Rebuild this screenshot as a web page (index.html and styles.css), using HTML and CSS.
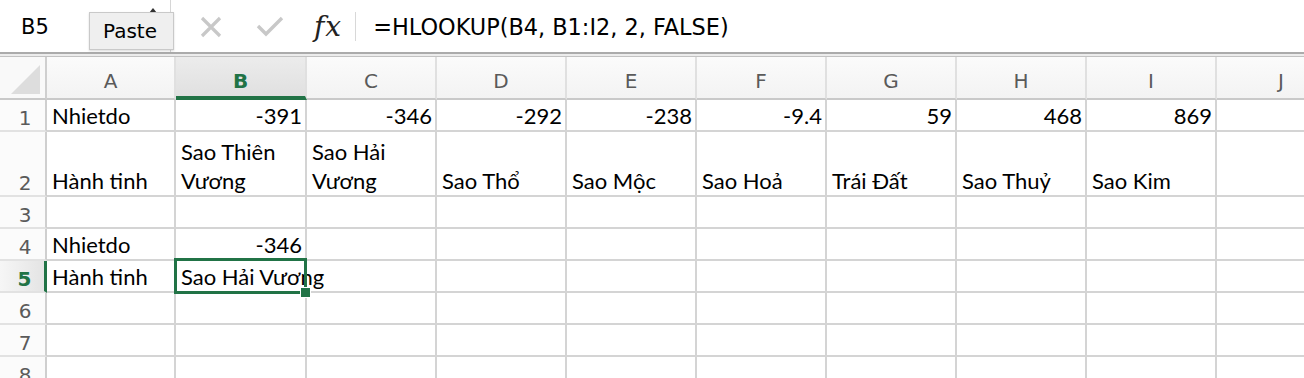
FILE: index.html
```html
<!DOCTYPE html>
<html lang="vi">
<head>
  <meta charset="UTF-8" />
  <title>HLOOKUP</title>
  <link rel="stylesheet" href="styles.css">
</head>
<body>
  <div class="toolbar">
    <div class="namebox">
      <span>B5</span>
      <span class="caret"></span>
    </div>
    <div class="tooltip">Paste</div>
    <div class="actions">
      <svg class="icon-x" width="24" height="22" viewBox="0 0 24 22">
        <path d="M3 2 L21 20 M21 2 L3 20" stroke="#c8c8c8" stroke-width="3.2" fill="none"/>
      </svg>
      <svg class="icon-check" width="28" height="22" viewBox="0 0 28 22">
        <path d="M2 11 L10 19 L26 3" stroke="#c8c8c8" stroke-width="3.4" fill="none"/>
      </svg>
      <span class="fx">fx</span>
      <span class="divider"></span>
    </div>
    <div class="formula">=HLOOKUP(B4, B1:I2, 2, FALSE)</div>
  </div>
  <div class="rule"></div>

  <div class="sheet">
    <div class="row head">
      <div class="corner">
        <svg width="32" height="30" viewBox="0 0 32 30"><polygon points="30,0 30,29 1,29" fill="#dddddd"/></svg>
      </div>
      <div class="col">A</div>
      <div class="col active">B</div>
      <div class="col">C</div>
      <div class="col">D</div>
      <div class="col">E</div>
      <div class="col">F</div>
      <div class="col">G</div>
      <div class="col">H</div>
      <div class="col">I</div>
      <div class="col">J</div>
    </div>

    <div class="row">
      <div class="rh">1</div>
      <div class="cell">Nhietdo</div>
      <div class="cell val">-391</div>
      <div class="cell val">-346</div>
      <div class="cell val">-292</div>
      <div class="cell val">-238</div>
      <div class="cell val">-9.4</div>
      <div class="cell val">59</div>
      <div class="cell val">468</div>
      <div class="cell val">869</div>
      <div class="cell"></div>
    </div>

    <div class="row tall">
      <div class="rh">2</div>
      <div class="cell">Hành tinh</div>
      <div class="cell">Sao Thiên Vương</div>
      <div class="cell">Sao Hải Vương</div>
      <div class="cell">Sao Thổ</div>
      <div class="cell">Sao Mộc</div>
      <div class="cell">Sao Hoả</div>
      <div class="cell">Trái Đất</div>
      <div class="cell">Sao Thuỷ</div>
      <div class="cell">Sao Kim</div>
      <div class="cell"></div>
    </div>

    <div class="row">
      <div class="rh">3</div>
      <div class="cell"></div><div class="cell"></div><div class="cell"></div><div class="cell"></div><div class="cell"></div>
      <div class="cell"></div><div class="cell"></div><div class="cell"></div><div class="cell"></div><div class="cell"></div>
    </div>

    <div class="row">
      <div class="rh">4</div>
      <div class="cell">Nhietdo</div>
      <div class="cell val">-346</div>
      <div class="cell"></div><div class="cell"></div><div class="cell"></div><div class="cell"></div>
      <div class="cell"></div><div class="cell"></div><div class="cell"></div><div class="cell"></div>
    </div>

    <div class="row">
      <div class="rh active">5</div>
      <div class="cell">Hành tinh</div>
      <div class="cell selected">
        <span class="overflow">Sao Hải Vương</span>
        <span class="selection"><span class="handle"></span></span>
      </div>
      <div class="cell"></div><div class="cell"></div><div class="cell"></div><div class="cell"></div>
      <div class="cell"></div><div class="cell"></div><div class="cell"></div><div class="cell"></div>
    </div>

    <div class="row">
      <div class="rh">6</div>
      <div class="cell"></div><div class="cell"></div><div class="cell"></div><div class="cell"></div><div class="cell"></div>
      <div class="cell"></div><div class="cell"></div><div class="cell"></div><div class="cell"></div><div class="cell"></div>
    </div>

    <div class="row">
      <div class="rh">7</div>
      <div class="cell"></div><div class="cell"></div><div class="cell"></div><div class="cell"></div><div class="cell"></div>
      <div class="cell"></div><div class="cell"></div><div class="cell"></div><div class="cell"></div><div class="cell"></div>
    </div>

    <div class="row">
      <div class="rh">8</div>
      <div class="cell"></div><div class="cell"></div><div class="cell"></div><div class="cell"></div><div class="cell"></div>
      <div class="cell"></div><div class="cell"></div><div class="cell"></div><div class="cell"></div><div class="cell"></div>
    </div>
  </div>
</body>
</html>
```

FILE: styles.css
```css
:root {
  --green: #217346;
  --grid: #d4d4d4;
  --label: #5a5a5a;
}

* {
  box-sizing: border-box;
  margin: 0;
  padding: 0;
}

body {
  width: 1304px;
  height: 378px;
  overflow: hidden;
  background: #ffffff;
  font-family: 'DejaVu Sans', sans-serif;
  color: #000;
}

/* formula bar */
.toolbar {
  position: relative;
  height: 52px;
  display: flex;
  align-items: center;
}

.namebox {
  position: relative;
  width: 171px;
  height: 52px;
  border-right: 1px solid #d6d6d6;
  padding: 15px 0 0 21px;
  font-size: 21px;
}

.caret {
  position: absolute;
  left: 149px;
  top: 8px;
  border-left: 4px solid transparent;
  border-right: 4px solid transparent;
  border-bottom: 5px solid #333;
}

.tooltip {
  position: absolute;
  left: 89px;
  top: 12px;
  width: 85px;
  height: 38px;
  background: #efefef;
  border: 1px solid #c9c9c9;
  box-shadow: 0 1px 2px rgba(0, 0, 0, 0.15);
  font-size: 20px;
  padding: 6px 0 0 13px;
}

.actions {
  display: flex;
  align-items: center;
  height: 52px;
  padding-left: 28px;
}

.icon-x {
  margin-top: 2px;
}

.icon-check {
  margin: 0 0 0 33px;
}

.fx {
  margin-left: 30px;
  font-family: 'DejaVu Serif', serif;
  font-style: italic;
  font-size: 28px;
  color: #222;
  letter-spacing: 1px;
}

.divider {
  width: 1px;
  height: 29px;
  background: #d8d8d8;
  margin-left: 13px;
}

.formula {
  margin-left: 17px;
  font-size: 22.4px;
  padding-top: 2px;
}

.rule {
  height: 5px;
  border-top: 2px solid #ababab;
  border-bottom: 1px solid #c2c2c2;
  background: #ececec;
}

/* grid */
.row {
  display: grid;
  grid-template-columns: 47px 129px 131px repeat(8, 130px);
  height: 32px;
}

.row.tall {
  height: 65px;
}

.row.head {
  height: 43px;
}

.corner {
  background: #f9f9f9;
  border-right: 2px solid #cfcfcf;
  border-bottom: 2px solid #c9c9c9;
  display: flex;
  align-items: flex-end;
  justify-content: flex-end;
  padding: 0 3px 3px 0;
}

.col {
  background: linear-gradient(#fbfbfb, #f3f3f3);
  border-right: 2px solid #e0e0e0;
  border-bottom: 2px solid #c9c9c9;
  display: flex;
  align-items: center;
  justify-content: center;
  padding-top: 6px;
  font-size: 20px;
  color: var(--label);
}

.col.active {
  background: linear-gradient(#ececec, #e0e0e0);
  border-bottom: 4px solid var(--green);
  color: var(--green);
  font-weight: bold;
  padding-top: 8px;
}

.rh {
  background: #fbfbfb;
  border-right: 2px solid #cfcfcf;
  border-bottom: 2px solid #e2e2e2;
  display: flex;
  align-items: flex-end;
  justify-content: center;
  padding-left: 5px;
  font-size: 20px;
  line-height: 24px;
  color: var(--label);
}

.rh.active {
  background: linear-gradient(to right, #f6f6f6, #e4e4e4);
  border-right: 3px solid var(--green);
  color: var(--green);
  font-weight: bold;
}

.cell {
  position: relative;
  border-right: 2px solid var(--grid);
  border-bottom: 2px solid var(--grid);
  display: flex;
  align-items: flex-end;
  padding: 0 5px 0 5px;
  font-family: 'Lato', 'Noto Sans', sans-serif;
  font-size: 22px;
  line-height: 29px;
}

.cell.val {
  justify-content: flex-end;
  padding-right: 3px;
}

.overflow {
  white-space: nowrap;
}

.selection {
  position: absolute;
  left: -2px;
  top: -3px;
  right: -2px;
  bottom: -3px;
  border: 3px solid var(--green);
  z-index: 2;
}

.handle {
  position: absolute;
  right: -7px;
  bottom: -7px;
  width: 11px;
  height: 11px;
  background: var(--green);
  border: 1px solid #fff;
}
```
